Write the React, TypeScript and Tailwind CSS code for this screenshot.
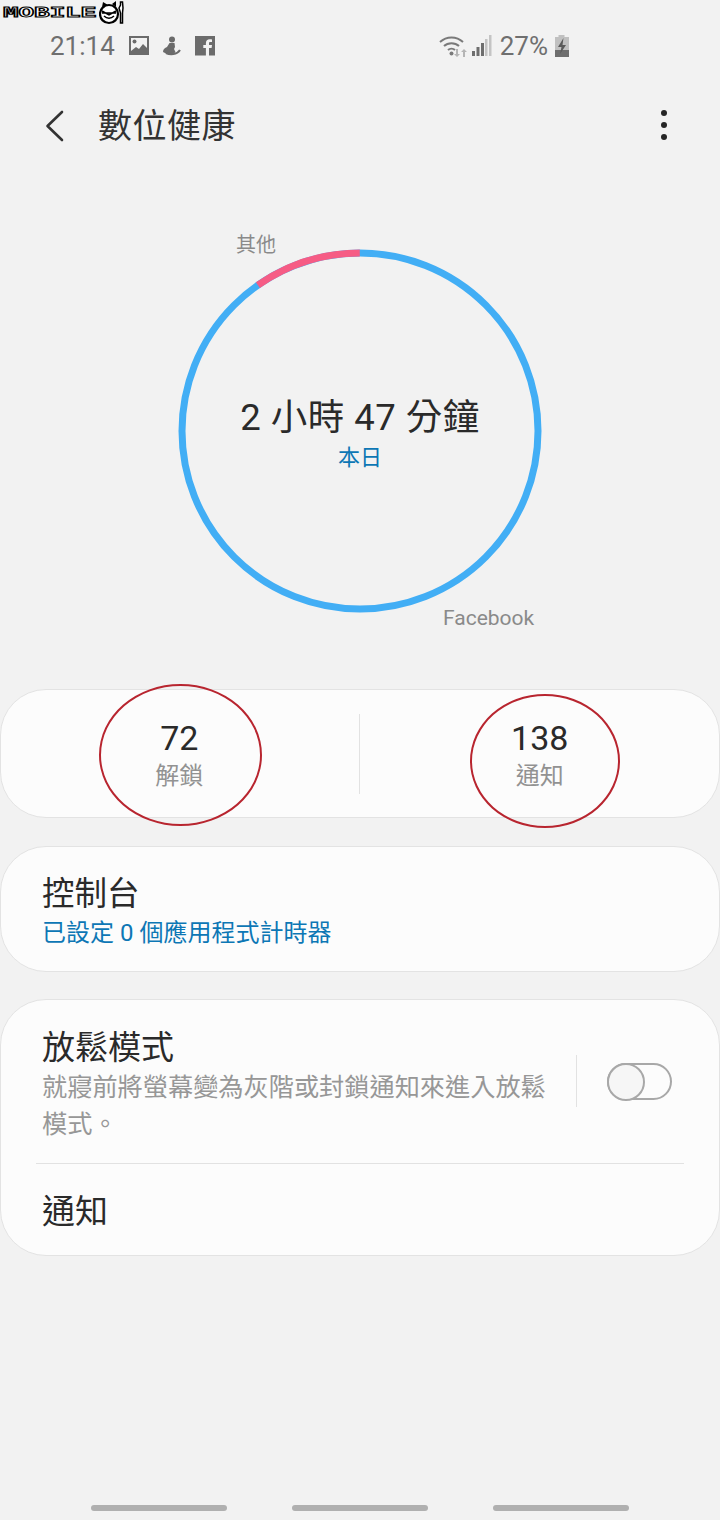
import React from 'react';

const CJK = "font-['Roboto','Noto_Sans_CJK_TC',sans-serif]";

const StatusIcons = () => (
  <div className="flex items-center gap-[13px] ml-[14px]">
    <svg width="20" height="20" viewBox="0 0 20 20" className="text-[#6b6b6b]">
      <path fill="currentColor" d="M0 0h20v19H0z" />
      <path fill="#f2f2f2" d="M2 2h16v10l-4-4-4 5-3-2-5 4z" />
      <circle cx="5.500" cy="5.500" r="2" fill="#6b6b6b" />
    </svg>
    <svg width="20" height="20" viewBox="0 0 20 20" className="text-[#6b6b6b]">
      <circle cx="10" cy="3.500" r="3" fill="currentColor" />
      <path fill="currentColor" d="M7.500 7h5l.5 4-1 2 1.500 3-2 2H5l-4-2c0-3 2-4 4-5z" />
      <path fill="none" stroke="currentColor" strokeWidth="2" d="M4 17c4 2 11 2 14-3" />
    </svg>
    <svg width="20" height="20" viewBox="0 0 20 20" className="text-[#6b6b6b]">
      <path fill="currentColor" d="M0 0h20v19.500h-6v-7.500h2.600l.4-3h-3V7.500c0-.9.300-1.400 1.500-1.400H17V3.400c-.4 0-1.300-.1-2.300-.1-2.300 0-3.800 1.400-3.800 3.900V9H8.300v3h2.600v7.500H0z" />
    </svg>
  </div>
);

const SystemIcons = () => (
  <div className="flex items-center">
    <svg width="30" height="24" viewBox="0 0 30 24" className="text-[#7a7a7a]">
      <path fill="none" stroke="currentColor" strokeWidth="2" d="M1 8c6.500-6 16.500-6 23 0M5 12c4-3.800 11-3.800 15 0M9 16c2-1.800 5-1.800 7 0" />
      <circle cx="12.500" cy="19.500" r="2" fill="currentColor" />
      <path fill="#b5b5b5" d="M17 15h2v5h2l-3 3-3-3h2zM24 23h2v-5h2l-3-3-3 3h2z" />
    </svg>
    <svg width="20" height="22" viewBox="0 0 20 22" className="ml-[3px]">
      <rect x="0" y="16" width="3" height="5" fill="#6e6e6e" />
      <rect x="4.500" y="12" width="3" height="9" fill="#6e6e6e" />
      <rect x="9" y="8" width="3" height="13" fill="#6e6e6e" />
      <rect x="13" y="4" width="2.500" height="17" fill="#c4c4c4" />
      <rect x="17" y="0" width="2.500" height="21" fill="#c4c4c4" />
    </svg>
    <span className="ml-[8px] text-[26px] leading-none text-[#6f6f6f] font-['Roboto',sans-serif]">27%</span>
    <svg width="16" height="22" viewBox="0 0 16 22" className="ml-[6px]">
      <path fill="#c0c0c0" d="M4.500 0h6v2H15v20H1V2h3.500z" />
      <path fill="#6e6e6e" d="M1 15h14v7H1z" />
      <path fill="#5a5a5a" d="M9.500 3 4 12h3.500L6 19l6-9H8.500z" />
    </svg>
  </div>
);

const Watermark = () => (
  <div className="absolute left-[3px] top-0 flex items-center h-[26px]">
    <span className="block w-[96px] origin-left [transform:scaleX(1.85)] font-['Liberation_Mono',monospace] text-[14px] font-bold leading-none text-white [-webkit-text-stroke:1px_#000]">
      MOBILE
    </span>
    <svg width="28" height="24" viewBox="0 0 28 24">
      <circle cx="10" cy="13" r="9" fill="#fff" stroke="#000" strokeWidth="2.200" />
      <path fill="none" stroke="#000" strokeWidth="1.500" d="M3 10l7 4 7-4M5 15c3 3 7 3 10 0M3 12h14" />
      <path fill="#000" d="M3 6l1-5 5 3zM13 3l4-3v6z" />
      <path fill="#fff" stroke="#000" strokeWidth="1.500" d="M21.500 1v3l-1.500 3 1.500 5v10h2V12l.5-5-.5-6z" />
    </svg>
  </div>
);

const Ring = () => (
  <svg width="368" height="368" viewBox="0 0 368 368" className="block">
    <circle cx="184" cy="184" r="178" fill="none" stroke="#42aef5" strokeWidth="7" />
    <circle
      cx="184"
      cy="184"
      r="178"
      fill="none"
      stroke="#f65c85"
      strokeWidth="7"
      strokeDasharray="108.500 1010"
      transform="rotate(-125 184 184)"
    />
  </svg>
);

const Ellipse = ({ className }: { className: string }) => (
  <div className={`absolute rounded-[50%] border-2 border-[#b8252f] pointer-events-none ${className}`} />
);

export default function App() {
  return (
    <div className={`relative w-[720px] h-[1520px] overflow-hidden bg-[#f2f2f2] ${CJK}`}>
      <Watermark />

      {/* status bar */}
      <div className="flex items-center justify-between pl-[50px] pr-[150px] pt-[33px] h-[59px]">
        <div className="flex items-center">
          <span className="text-[26px] leading-none text-[#6f6f6f]">21:14</span>
          <StatusIcons />
        </div>
        <SystemIcons />
      </div>

      {/* header */}
      <div className="flex items-center h-[72px] mt-[31px] pl-[45px] pr-[53px]">
        <svg width="20" height="32" viewBox="0 0 20 32" className="text-[#333333]">
          <path fill="none" stroke="currentColor" strokeWidth="2.600" strokeLinecap="round" strokeLinejoin="round" d="M17 2 2.500 16 17 30" />
        </svg>
        <h1 className="ml-[33px] text-[34px] leading-none text-[#333333] tracking-[0.5px]">數位健康</h1>
        <div className="ml-auto -mt-[2px] flex flex-col gap-[6px]">
          <span className="w-[6px] h-[6px] rounded-full bg-[#252525]" />
          <span className="w-[6px] h-[6px] rounded-full bg-[#252525]" />
          <span className="w-[6px] h-[6px] rounded-full bg-[#252525]" />
        </div>
      </div>

      {/* usage chart */}
      <div className="relative mx-auto mt-[85px] w-[368px] h-[368px]">
        <Ring />
        <div className="absolute inset-0 flex flex-col items-center pt-[149px]">
          <span className="text-[36.500px] leading-[44px] text-[#2a2a2a] tracking-[0.5px]">2 小時 47 分鐘</span>
          <span className="mt-[5px] text-[22px] leading-[26px] text-[#0d77b5]">本日</span>
        </div>
        <span className="absolute left-[60px] top-[-14px] text-[20px] leading-[24px] text-[#8a8a8a]">其他</span>
        <span className="absolute left-[267px] top-[358px] text-[21px] leading-[26px] text-[#8a8a8a]">Facebook</span>
      </div>

      {/* stats */}
      <div className="mt-[74px] h-[129px] flex items-center rounded-[46px] border border-[#e3e3e3] bg-[#fcfcfc]">
        <div className="flex-1 flex flex-col items-center -translate-x-px">
          <span className="text-[34px] leading-[40px] text-[#2a2a2a]">72</span>
          <span className="mt-[4px] text-[24px] leading-[28px] text-[#929292]">解鎖</span>
        </div>
        <div className="w-px h-[80px] bg-[#e2e2e2] -translate-x-px" />
        <div className="flex-1 flex flex-col items-center">
          <span className="text-[34px] leading-[40px] text-[#2a2a2a]">138</span>
          <span className="mt-[4px] text-[24px] leading-[28px] text-[#929292]">通知</span>
        </div>
      </div>

      {/* dashboard */}
      <div className="mt-[28px] h-[126px] flex flex-col justify-center px-[41px] pt-[3px] rounded-[46px] border border-[#e3e3e3] bg-[#fcfcfc]">
        <div className="text-[32.500px] leading-[42px] text-[#2a2a2a]">控制台</div>
        <div className="mt-[3px] text-[24px] leading-[30px] text-[#0d77b5]">已設定 0 個應用程式計時器</div>
      </div>

      {/* wind down + notifications */}
      <div className="mt-[27px] h-[257px] flex flex-col rounded-[46px] border border-[#e3e3e3] bg-[#fcfcfc]">
        <div className="flex h-[163px] pl-[41px] pr-[47px] pt-[27px]">
          <div className="w-[510px]">
            <div className="text-[33px] leading-[42px] text-[#2a2a2a]">放鬆模式</div>
            <div className="text-[25.200px] leading-[37px] text-[#979797]">就寢前將螢幕變為灰階或封鎖通知來進入放鬆模式。</div>
          </div>
          <div className="ml-[25px] mt-[28px] w-px h-[52px] bg-[#e2e2e2]" />
          <div className="relative ml-[30px] mt-[36px] w-[65px] h-[37px] rounded-full border-2 border-[#a8a8a8]">
            <div className="absolute -left-[2px] -top-[2px] w-[38px] h-[38px] rounded-full border-2 border-[#a8a8a8] bg-[#f6f6f6]" />
          </div>
        </div>
        <div className="mx-[35px] h-px bg-[#e2e2e2]" />
        <div className="flex-1 flex items-center pl-[41px] pt-[4px] text-[33px] text-[#2a2a2a]">通知</div>
      </div>

      {/* gesture hints */}
      <div className="mt-[249px] flex justify-between px-[91px]">
        <span className="w-[136px] h-[6px] rounded-full bg-[#b0b0b0]" />
        <span className="w-[136px] h-[6px] rounded-full bg-[#b0b0b0]" />
        <span className="w-[136px] h-[6px] rounded-full bg-[#b0b0b0]" />
      </div>

      <Ellipse className="left-[99px] top-[684px] w-[163px] h-[142px]" />
      <Ellipse className="left-[470px] top-[694px] w-[150px] h-[134px]" />
    </div>
  );
}
